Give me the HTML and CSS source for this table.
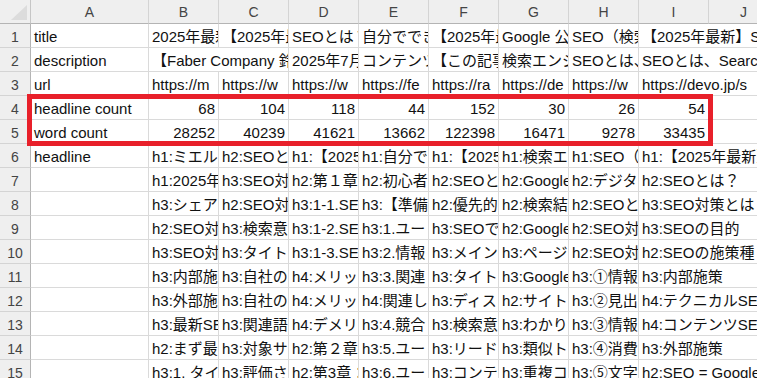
FILE: index.html
```html
<!DOCTYPE html>
<html lang="ja">
<head>
<meta charset="utf-8">
<title>Sheet</title>
<link rel="stylesheet" href="styles.css">
</head>
<body>
<div class="sheet">
  <div class="grid">
    <div class="corner"><span class="tri"></span></div>
    <div class="ch">A</div><div class="ch">B</div><div class="ch">C</div><div class="ch">D</div><div class="ch">E</div><div class="ch">F</div><div class="ch">G</div><div class="ch">H</div><div class="ch">I</div><div class="ch">J</div>

    <div class="rh">1</div>
    <div class="c">title</div>
    <div class="c">2025年最新</div>
    <div class="c">【2025年最</div>
    <div class="c">SEOとは？</div>
    <div class="c">自分ででき</div>
    <div class="c">【2025年最</div>
    <div class="c">Google 公</div>
    <div class="c">SEO（検索</div>
    <div class="c span2">【2025年最新】S</div>

    <div class="rh">2</div>
    <div class="c">description</div>
    <div class="c span2">【Faber Company 鈴</div>
    <div class="c">2025年7月</div>
    <div class="c">コンテンツ</div>
    <div class="c">【この記事</div>
    <div class="c">検索エンジ</div>
    <div class="c">SEOとは、</div>
    <div class="c span2">SEOとは、Search</div>

    <div class="rh">3</div>
    <div class="c">url</div>
    <div class="c">https://m</div>
    <div class="c">https://w</div>
    <div class="c">https://w</div>
    <div class="c">https://fe</div>
    <div class="c">https://ra</div>
    <div class="c">https://de</div>
    <div class="c">https://w</div>
    <div class="c span2">https://devo.jp/s</div>

    <div class="rh">4</div>
    <div class="c">headline count</div>
    <div class="c n">68</div><div class="c n">104</div><div class="c n">118</div><div class="c n">44</div><div class="c n">152</div><div class="c n">30</div><div class="c n">26</div><div class="c n">54</div><div class="c"></div>

    <div class="rh">5</div>
    <div class="c">word count</div>
    <div class="c n">28252</div><div class="c n">40239</div><div class="c n">41621</div><div class="c n">13662</div><div class="c n">122398</div><div class="c n">16471</div><div class="c n">9278</div><div class="c n">33435</div><div class="c"></div>

    <div class="rh">6</div>
    <div class="c">headline</div>
    <div class="c">h1:ミエル</div><div class="c">h2:SEOと</div><div class="c">h1:【2025</div><div class="c">h1:自分で</div><div class="c">h1:【2025</div><div class="c">h1:検索エ</div><div class="c">h1:SEO（</div><div class="c span2">h1:【2025年最新】</div>

    <div class="rh">7</div>
    <div class="c"></div>
    <div class="c">h1:2025年</div><div class="c">h3:SEO対</div><div class="c">h2:第１章</div><div class="c">h2:初心者</div><div class="c">h2:SEOと</div><div class="c">h2:Google</div><div class="c">h2:デジタ</div><div class="c span2">h2:SEOとは？</div>

    <div class="rh">8</div>
    <div class="c"></div>
    <div class="c">h3:シェア</div><div class="c">h2:SEO対</div><div class="c">h3:1-1.SE</div><div class="c">h3:【準備</div><div class="c">h2:優先的</div><div class="c">h2:検索結</div><div class="c">h2:SEOと</div><div class="c span2">h3:SEO対策とは？</div>

    <div class="rh">9</div>
    <div class="c"></div>
    <div class="c">h2:SEO対</div><div class="c">h3:検索意</div><div class="c">h3:1-2.SE</div><div class="c">h3:1.ユー</div><div class="c">h3:SEOで</div><div class="c">h2:Google</div><div class="c">h2:SEO対</div><div class="c span2">h3:SEOの目的</div>

    <div class="rh">10</div>
    <div class="c"></div>
    <div class="c">h3:SEO対</div><div class="c">h3:タイト</div><div class="c">h3:1-3.SE</div><div class="c">h3:2.情報</div><div class="c">h3:メイン</div><div class="c">h3:ページ</div><div class="c">h2:SEO対</div><div class="c span2">h2:SEOの施策種</div>

    <div class="rh">11</div>
    <div class="c"></div>
    <div class="c">h3:内部施</div><div class="c">h3:自社の</div><div class="c">h4:メリッ</div><div class="c">h3:3.関連</div><div class="c">h3:タイト</div><div class="c">h3:Google</div><div class="c">h3:①情報</div><div class="c span2">h3:内部施策</div>

    <div class="rh">12</div>
    <div class="c"></div>
    <div class="c">h3:外部施</div><div class="c">h3:自社の</div><div class="c">h4:メリッ</div><div class="c">h4:関連し</div><div class="c">h3:ディス</div><div class="c">h2:サイト</div><div class="c">h3:②見出</div><div class="c span2">h4:テクニカルSE</div>

    <div class="rh">13</div>
    <div class="c"></div>
    <div class="c">h3:最新SE</div><div class="c">h3:関連語</div><div class="c">h4:デメリ</div><div class="c">h3:4.競合</div><div class="c">h3:検索意</div><div class="c">h3:わかり</div><div class="c">h3:③情報</div><div class="c span2">h4:コンテンツSE</div>

    <div class="rh">14</div>
    <div class="c"></div>
    <div class="c">h2:まず最</div><div class="c">h3:対象サ</div><div class="c">h2:第２章</div><div class="c">h3:5.ユー</div><div class="c">h3:リード</div><div class="c">h3:類似ト</div><div class="c">h3:④消費</div><div class="c span2">h3:外部施策</div>

    <div class="rh">15</div>
    <div class="c"></div>
    <div class="c">h3:1. タイ</div><div class="c">h3:評価さ</div><div class="c">h2:第3章：</div><div class="c">h3:6.ユー</div><div class="c">h3:コンテ</div><div class="c">h3:重複コ</div><div class="c">h3:⑤文字</div><div class="c span2">h2:SEO = Google</div>
  </div>
  <div class="mark"></div>
</div>
</body>
</html>
```
FILE: styles.css
```css
html, body {
  margin: 0;
  padding: 0;
  background: #ffffff;
}
.sheet {
  position: relative;
  width: 757px;
  height: 378px;
  overflow: hidden;
  font-family: "Liberation Sans", "Noto Sans CJK JP", sans-serif;
  font-size: 15px;
  color: #111;
}
.grid {
  display: grid;
  grid-template-columns: 31px 118px repeat(9, 70px);
  grid-template-rows: 24px;
  grid-auto-rows: 24px;
}
.corner {
  position: relative;
  background: #efefef;
  border-right: 1px solid #c6c6c6;
  border-bottom: 1px solid #b4b4b4;
  box-sizing: border-box;
}
.tri {
  position: absolute;
  right: 3px;
  bottom: 3px;
  width: 0;
  height: 0;
  border-left: 16px solid transparent;
  border-bottom: 15px solid #dcdcdc;
}
.ch {
  background: #efefef;
  border-right: 1px solid #d4d4d4;
  border-bottom: 1px solid #b4b4b4;
  box-sizing: border-box;
  display: flex;
  align-items: center;
  justify-content: center;
  color: #444;
  font-size: 14px;
  padding-top: 1px;
}
.rh {
  background: #efefef;
  border-right: 1px solid #b4b4b4;
  border-bottom: 1px solid #d4d4d4;
  box-sizing: border-box;
  display: flex;
  align-items: center;
  justify-content: center;
  color: #444;
  font-size: 14px;
  padding-top: 3px;
}
.c {
  border-right: 1px solid #dadada;
  border-bottom: 1px solid #dadada;
  box-sizing: border-box;
  white-space: nowrap;
  overflow: hidden;
  padding: 2px 3px 0 3px;
  line-height: 21px;
}
.n {
  text-align: right;
}
.span2 {
  grid-column: span 2;
}
.mark {
  position: absolute;
  left: 27px;
  top: 94px;
  width: 686px;
  height: 52px;
  box-sizing: border-box;
  border: 5px solid #e8202a;
}
```
